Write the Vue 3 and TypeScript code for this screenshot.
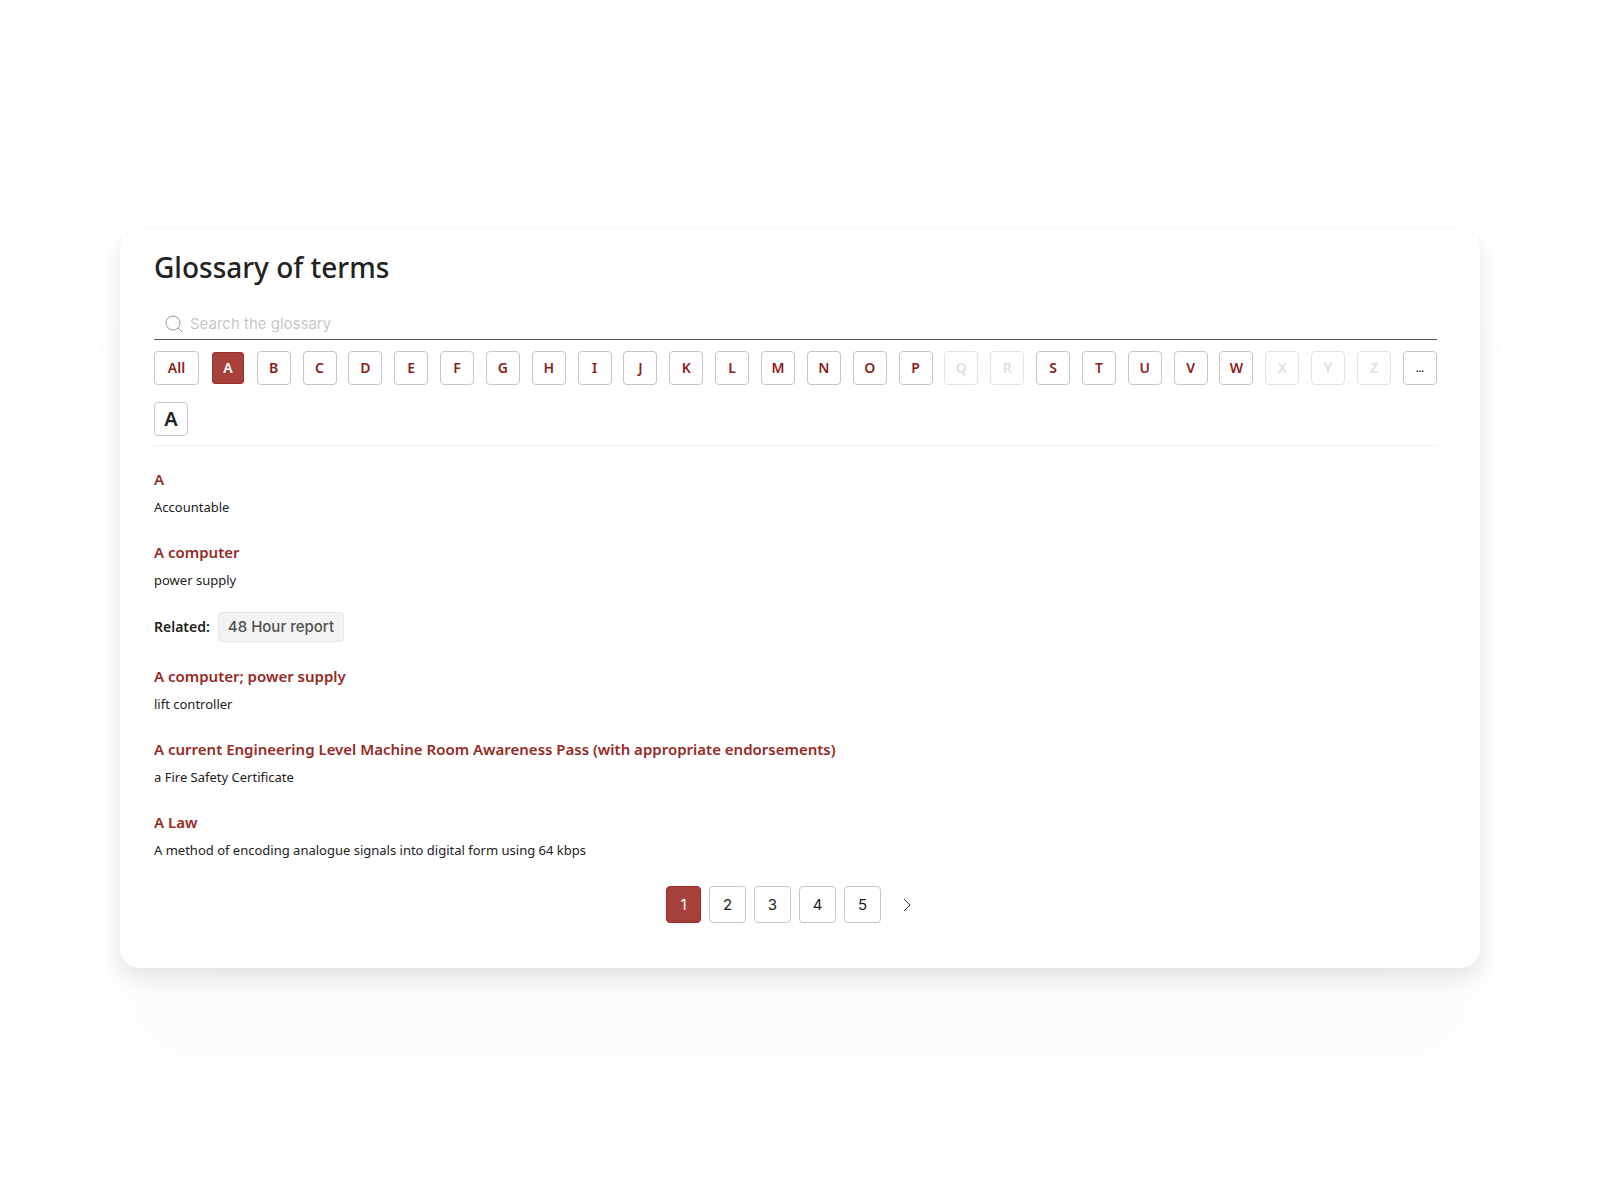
<script setup lang="ts">
import { ref } from 'vue'

interface Entry {
  term: string
  description: string
  related?: string[]
}

const query = ref('')
const emptyLetters = 'QRXYZ'
const letters = 'ABCDEFGHIJKLMNOPQRSTUVWXYZ'.split('')
const active = ref('A')
const page = ref(1)
const pages = [1, 2, 3, 4, 5]

const entries: Entry[] = [
  { term: 'A', description: 'Accountable' },
  { term: 'A computer', description: 'power supply', related: ['48 Hour report'] },
  { term: 'A computer; power supply', description: 'lift controller' },
  {
    term: 'A current Engineering Level Machine Room Awareness Pass (with appropriate endorsements)',
    description: 'a Fire Safety Certificate',
  },
  { term: 'A Law', description: 'A method of encoding analogue signals into digital form using 64 kbps' },
]
</script>

<template>
  <main class="page">
    <section class="card">
      <h1 class="title">Glossary of terms</h1>

      <label class="search">
        <svg class="search-icon" viewBox="0 0 18 18" aria-hidden="true">
          <circle cx="8" cy="8" r="7" />
          <path d="M13 13l4 4" />
        </svg>
        <input v-model="query" type="text" placeholder="Search the glossary" aria-label="Search the glossary" />
      </label>

      <nav class="letters" aria-label="Letters">
        <button class="letter all" type="button" @click="active = 'All'">All</button>
        <button
          v-for="letter in letters"
          :key="letter"
          type="button"
          class="letter"
          :class="{ active: active === letter }"
          :disabled="emptyLetters.includes(letter)"
          @click="active = letter"
        >
          {{ letter }}
        </button>
        <button class="letter other" type="button" @click="active = '…'">...</button>
      </nav>

      <div class="group">
        <h2 class="group-letter">A</h2>
      </div>

      <article v-for="entry in entries" :key="entry.term" class="entry">
        <h3 class="term"><a href="#">{{ entry.term }}</a></h3>
        <p class="description">{{ entry.description }}</p>
        <div v-if="entry.related" class="related">
          <span class="related-label">Related:</span>
          <a v-for="item in entry.related" :key="item" class="chip" href="#">{{ item }}</a>
        </div>
      </article>

      <nav class="pager" aria-label="Pages">
        <button
          v-for="n in pages"
          :key="n"
          type="button"
          class="page-button"
          :class="{ active: page === n }"
          @click="page = n"
        >
          {{ n }}
        </button>
        <button class="next" type="button" aria-label="Next page">
          <svg viewBox="0 0 8 14" aria-hidden="true"><path d="M1 1l6 6-6 6" /></svg>
        </button>
      </nav>
    </section>
  </main>
</template>

<style>
body {
  background: #fff;
}
</style>

<style scoped>
.page {
  min-height: 100vh;
  box-sizing: border-box;
  display: flex;
  align-items: center;
  justify-content: center;
  padding-bottom: 2px;
  font-family: 'Noto Sans', sans-serif;
  color: #222;
}
.card {
  width: 85%;
  box-sizing: border-box;
  padding: 18px 43px 45px 34px;
  border-radius: 20px;
  background: #fff;
  box-shadow: 0 9px 22px rgba(0, 0, 0, 0.1), 0 100px 80px rgba(0, 0, 0, 0.018);
}
h1, h2, h3, p {
  margin: 0;
}
a {
  color: inherit;
  text-decoration: none;
}
button {
  padding: 0;
  font: inherit;
  background: #fff;
  box-sizing: border-box;
  cursor: pointer;
}
.title {
  font-size: 28px;
  line-height: 38px;
  font-weight: 500;
}
.search {
  display: flex;
  align-items: center;
  gap: 7px;
  height: 30px;
  margin-top: 21px;
  padding: 2px 0 0 11px;
  border-bottom: 1px solid #555;
}
.search-icon {
  width: 18px;
  height: 18px;
  fill: none;
  stroke: #999;
}
.search input {
  flex: 1;
  padding: 0;
  border: 0;
  outline: 0;
  background: none;
  font: 15px/24px Inter, sans-serif;
  color: #222;
}
.search input::placeholder {
  color: #c8c8c8;
  opacity: 1;
}
.letters {
  display: flex;
  align-items: center;
  justify-content: space-between;
  margin-top: 11px;
}
.letter {
  width: 34px;
  height: 34px;
  border: 1px solid #c6c6c6;
  border-radius: 4px;
  font-size: 14px;
  line-height: 20px;
  font-weight: 600;
  color: #8c1d18;
}
.letter.all {
  width: 45px;
}
.letter.active {
  width: 32px;
  height: 32px;
  margin: 0 1px;
  background: #a5403a;
  border-color: #9b2c26;
  border-radius: 3px;
  color: #fff;
}
.letter:disabled {
  border-color: #e4e4e4;
  color: #e0e0e0;
  cursor: default;
}
.letter.other {
  font-size: 10px;
  color: #222;
}
.group {
  margin: 17px 0 22px;
  padding-bottom: 9px;
  border-bottom: 1px solid #f0f0f0;
}
.group-letter {
  width: 34px;
  height: 34px;
  box-sizing: border-box;
  border: 1px solid #c6c6c6;
  border-radius: 4px;
  font-size: 20px;
  line-height: 32px;
  font-weight: 600;
  text-align: center;
}
.entry + .entry {
  margin-top: 23px;
}
.term {
  font-size: 15px;
  line-height: 22px;
  font-weight: 600;
  color: #962a25;
}
.description {
  margin-top: 6px;
  font-size: 13px;
  line-height: 22px;
}
.related {
  display: flex;
  align-items: center;
  gap: 8px;
  margin-top: 21px;
}
.related-label {
  font-size: 14px;
  line-height: 22px;
  font-weight: 600;
}
.chip {
  height: 30px;
  box-sizing: border-box;
  padding: 0 9px;
  border: 1px solid #e6e6e6;
  border-radius: 4px;
  background: #f3f3f3;
  font: 500 15px/28px Inter, sans-serif;
  color: #505050;
}
.pager {
  display: flex;
  justify-content: center;
  gap: 8px;
  margin-top: 25px;
}
.page-button {
  width: 37px;
  height: 37px;
  border: 1px solid #c6c6c6;
  border-radius: 4px;
  font: 15px/24px Inter, sans-serif;
  color: #222;
}
.page-button.active {
  width: 35px;
  background: #a5403a;
  border-color: #9b2c26;
  color: #fff;
}
.next {
  display: flex;
  align-items: center;
  justify-content: center;
  width: 36px;
  border: 0;
}
.next svg {
  width: 8px;
  height: 14px;
  fill: none;
  stroke: #333;
}
</style>
